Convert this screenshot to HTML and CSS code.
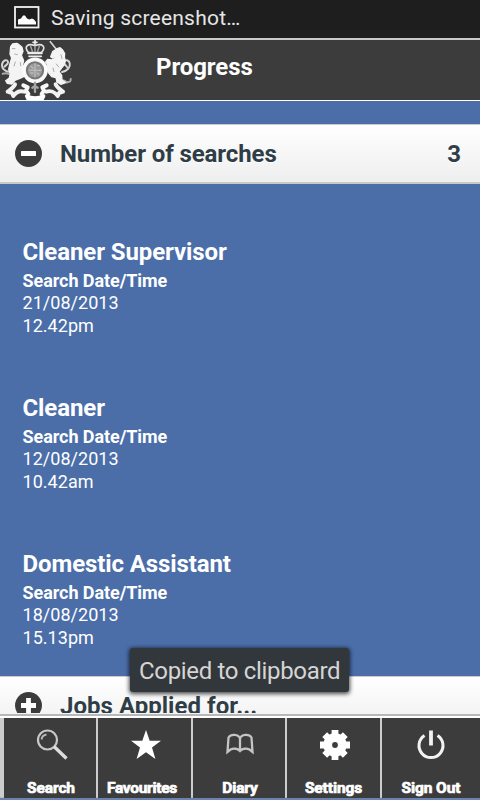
FILE: index.html
```html
<!DOCTYPE html>
<html lang="en">
<head>
<meta charset="utf-8">
<title>Progress</title>
<link rel="stylesheet" href="styles.css">
</head>
<body>
<div class="screen">
  <div class="status">
    <svg class="status-icon" width="26" height="24" viewBox="0 0 26 24"><rect x="1" y="1" width="23.500" height="20.500" fill="none" stroke="#f2f2f2" stroke-width="1.800"/><path d="M4 18.500v-5l3-1 2-3h2l2 3 2.500 1 2.500-1 2 1 2 2.500v2.500z" fill="#fff"/></svg>
    <span class="status-text">Saving screenshot…</span>
  </div>
  <header class="header">
    <svg class="crest" width="72" height="60" viewBox="0 12 216 180" fill="none" stroke-linecap="round" stroke-linejoin="round">
      <g stroke="#d5d5d5" stroke-width="6">
        <path d="M30 108C12 106 3 95 7 82c4-12 16-12 17-4 1 8-8 9-10 14"/>
        <path d="M186 108c17-4 26-15 23-27-3-10-13-11-17-4-3 7 7 11 9 16"/>
        <path d="M8 113c12-3 24 1 30 8M202 138c8 1 11-3 10-9M172 138c12-7 22-7 29 2" stroke="#aaa"/>
        <path d="M151 17l19 24" stroke-width="5"/>
      </g>
      <path fill="#f4f4f4" stroke="#f4f4f4" stroke-width="4" d="M32 32l6-8 12-2 7 4 9 8 3 12-5 12 7 16-3 12 5 16-2 20-13 6-12 4-11 12-13-2-5-8 11-8 3-13-5-13 4-17 5-17-5-12z"/>
      <path fill="#f4f4f4" stroke="#f4f4f4" stroke-width="4" d="M158 47l14-9 8-3 7 6 7 12-1 10 3 12-4 12-8 10-7 10 8 11 1 14 11 8-14 5-12-7-3-13-13-3-8-10-6-12 1-16-5-6 6-8 12 2 10-5 2-6-10 5-5-4z"/>
      <path d="M37 38h8M44 54l8 2M46 78l-4 12M61 80l1 9M183 56l3 12M169 84l7 9M159 96l3 11" stroke="#aaa" stroke-width="3"/>
      <path d="M86 50c-17-18-2-29 19-21 21-8 36 3 19 21z" stroke="#e4e4e4" stroke-width="5"/>
      <path d="M105 28v18M92 31l5 15M118 31l-5 15" stroke="#aaa" stroke-width="4"/>
      <path d="M105 13v14M99 19h12M84 52h42M87 61h37" stroke="#eee" stroke-width="5"/>
      <circle cx="105" cy="103" r="33" fill="#777" stroke="#fafafa" stroke-width="11"/>
      <circle cx="105" cy="103" r="23" fill="#999" stroke="#777" stroke-width="3"/>
      <path d="M105 84v38M88 103h35M93 91l6 6M112 89h6M92 111h7M112 111l5 5" stroke="#bbb" stroke-width="4"/>
      <path d="M105 140v28M97 155l8-5 8 5" stroke="#a5a5a5" stroke-width="7"/>
      <path d="M45 145c-4 9-13 15-22 22l13 4 4 9c8-12 20-17 33-13M167 145c4 9 13 15 22 22l-12 4-4 9c-8-12-22-17-34-13" stroke="#f2f2f2" stroke-width="12"/>
      <path d="M70 148l13 6-5 10 7 10M140 148l-13 6 5 10-7 10" stroke="#f7f7f7" stroke-width="12"/>
      <path d="M80 180c16 7 34 7 51 0l-5 11H85z" fill="#fff" stroke="#fff" stroke-width="10"/>
    </svg>
    <h1 class="title">Progress</h1>
  </header>
  <main class="content">
    <section class="bar">
      <svg class="bar-icon" width="28" height="28" viewBox="0 0 28 28"><circle cx="14.500" cy="13.500" r="13.500" fill="#3c3c3c"/><rect x="7" y="11" width="15" height="5" rx=".5" fill="#fff"/></svg>
      <span class="bar-text">Number of searches</span><span class="count">3</span>
    </section>
    <div class="list">
      <article class="item"><h2>Cleaner Supervisor</h2><h3>Search Date/Time</h3><p>21/08/2013</p><p>12.42pm</p></article>
      <article class="item"><h2>Cleaner</h2><h3>Search Date/Time</h3><p>12/08/2013</p><p>10.42am</p></article>
      <article class="item"><h2>Domestic Assistant</h2><h3>Search Date/Time</h3><p>18/08/2013</p><p>15.13pm</p></article>
    </div>
    <section class="bar jobs">
      <svg class="bar-icon" width="28" height="28" viewBox="0 0 28 28"><circle cx="14.500" cy="13.500" r="13.500" fill="#3c3c3c"/><path d="M7 13.500h15M14.500 6v15" stroke="#fff" stroke-width="4.800"/></svg>
      <span class="bar-text">Jobs Applied for...</span>
    </section>
  </main>
  <nav class="nav">
    <a class="tab search"><svg width="32" height="32" viewBox="0 0 32 32" fill="none"><circle cx="11.500" cy="11" r="9.500" stroke="#c8c8c8" stroke-width="2.200"/><path d="M5.500 10.500a6 6 0 0 1 5-5" stroke="#bbb" stroke-width="1.800"/><path d="M18 17.500L30.500 29.500" stroke="#ddd" stroke-width="3.400"/></svg><span>Search</span></a>
    <a class="tab favourites"><svg width="32" height="32" viewBox="0 0 32 32"><path fill="#fff" d="M16 1l3.700 10.700H31l-9 6.900L25.400 30 16 23.300 6.600 30 10 18.600l-9-6.900h11.300z"/></svg><span>Favourites</span></a>
    <a class="tab diary"><svg width="32" height="32" viewBox="0 0 32 32" fill="none" stroke="#c4c4c4" stroke-width="2.300"><path d="M16 9.500C14.500 5 7 4.500 4.500 8.500L3.500 23l3-2.500c3-1.500 7-1 9.500 1.500 2.500-2.500 6.500-3 9.500-1.500l3 2.500-1-14.500C25 4.500 17.500 5 16 9.500V22"/></svg><span>Diary</span></a>
    <a class="tab settings"><svg width="32" height="32" viewBox="0 0 32 32"><g fill="none" stroke="#fff"><circle cx="16" cy="16" r="7.300" stroke-width="8.800"/><path d="M16 1v6M16 25v6M1 16h6M25 16h6M5.700 5.700L10 10M22 22l4.300 4.300M26.300 5.700L22 10M10 22l-4.300 4.300" stroke-width="6.800"/></g></svg><span>Settings</span></a>
    <a class="tab"><svg width="32" height="32" viewBox="0 0 32 32" fill="none" stroke="#f2f2f2" stroke-width="3"><path d="M9.500 6.500a12 12 0 1 0 13 0"/><path d="M16 1.500v15" stroke-width="3.800"/></svg><span>Sign Out</span></a>
  </nav>
  <div class="toast">Copied to clipboard</div>
</div>
</body>
</html>
```

FILE: styles.css
```css
* { box-sizing: border-box; margin: 0; padding: 0; }
body { font-family: Roboto, "Liberation Sans", sans-serif; background: #4b6ea9; color: #fff; }
.screen { position: relative; width: 480px; height: 800px; overflow: hidden; display: flex; flex-direction: column; background: #4b6ea9; }
.status { height: 38px; flex: none; display: flex; align-items: center; padding: 0 0 3px 14px; background: #1e1e1e; }
.status-icon { flex: none; margin-top: 1px; }
.status-text { margin-left: 11px; font-size: 21px; line-height: 30px; letter-spacing: .22px; color: #e6e6e6; }
.header { height: 63px; flex: none; display: flex; border-top: 2px solid #c9c9c9; border-bottom: 1px solid #fff; background: #3c3c3c; }
.crest { flex: none; filter: blur(.4px); }
.title { margin-left: 84px; font-size: 24px; line-height: 28px; padding-top: 13px; letter-spacing: -.08px; }
.content { height: 612px; flex: none; overflow: hidden; padding-top: 23px; }
.bar { height: 60px; display: flex; align-items: center; padding: 0 19px 0 14px; border-top: 1px solid #ccc; border-bottom: 2px solid #c8c8c8; background: linear-gradient(#fff, #eee); color: #2f3e46; font-size: 24px; font-weight: bold; text-shadow: 0 1px 1px #fff; letter-spacing: -.1px; }
.jobs { letter-spacing: .03px; }
.bar-icon { margin-right: 18px; flex: none; }
.count { margin-left: auto; }
.list { height: 492px; padding: 54px 0 0 22.5px; }
.item { height: 156px; }
.item h2 { font-size: 24px; line-height: 28px; letter-spacing: -.1px; }
.item h3 { font-size: 18px; line-height: 22px; margin-top: 4px; letter-spacing: -.07px; }
.item p { font-size: 18px; line-height: 23px; letter-spacing: .04px; }
.item h3 + p { line-height: 22px; }
.nav { height: 85px; flex: none; display: grid; grid-template-columns: 92px 93px 92px 93px 98px; column-gap: 2px; padding: 4px 0 0 4px; border-top: 1px solid #f4f4f4; border-bottom: 1px solid #bbb; background: linear-gradient(#b8b8b8 2px, #fff 2px, #fff 4px, #ccc 4px); box-shadow: 0 2px #6c83b2; }
.tab { background: #3c3c3c; display: flex; flex-direction: column; align-items: center; padding-top: 11px; }
.tab svg { flex: none; width: 32px; height: 32px; }
.tab span { margin-top: 18px; font-size: 15.5px; line-height: 19px; font-weight: bold; letter-spacing: -.1px; white-space: nowrap; -webkit-text-stroke: .7px #fff; }
.search svg, .settings svg { margin-left: 3px; }
.search span { margin-left: 2px; }
.diary svg, .diary span { margin-left: 2px; }
.favourites svg { margin-left: 2px; }
.favourites span { margin-right: 5px; letter-spacing: -.3px; }
.toast { position: absolute; left: 130px; top: 648px; width: 219px; height: 44px; border-radius: 3px; background: #32373b; box-shadow: 0 1px 4px 1px rgba(0,0,0,.7); color: #d5d5d5; font-size: 24px; line-height: 46px; letter-spacing: -.33px; padding-left: 9px; white-space: nowrap; }
```
